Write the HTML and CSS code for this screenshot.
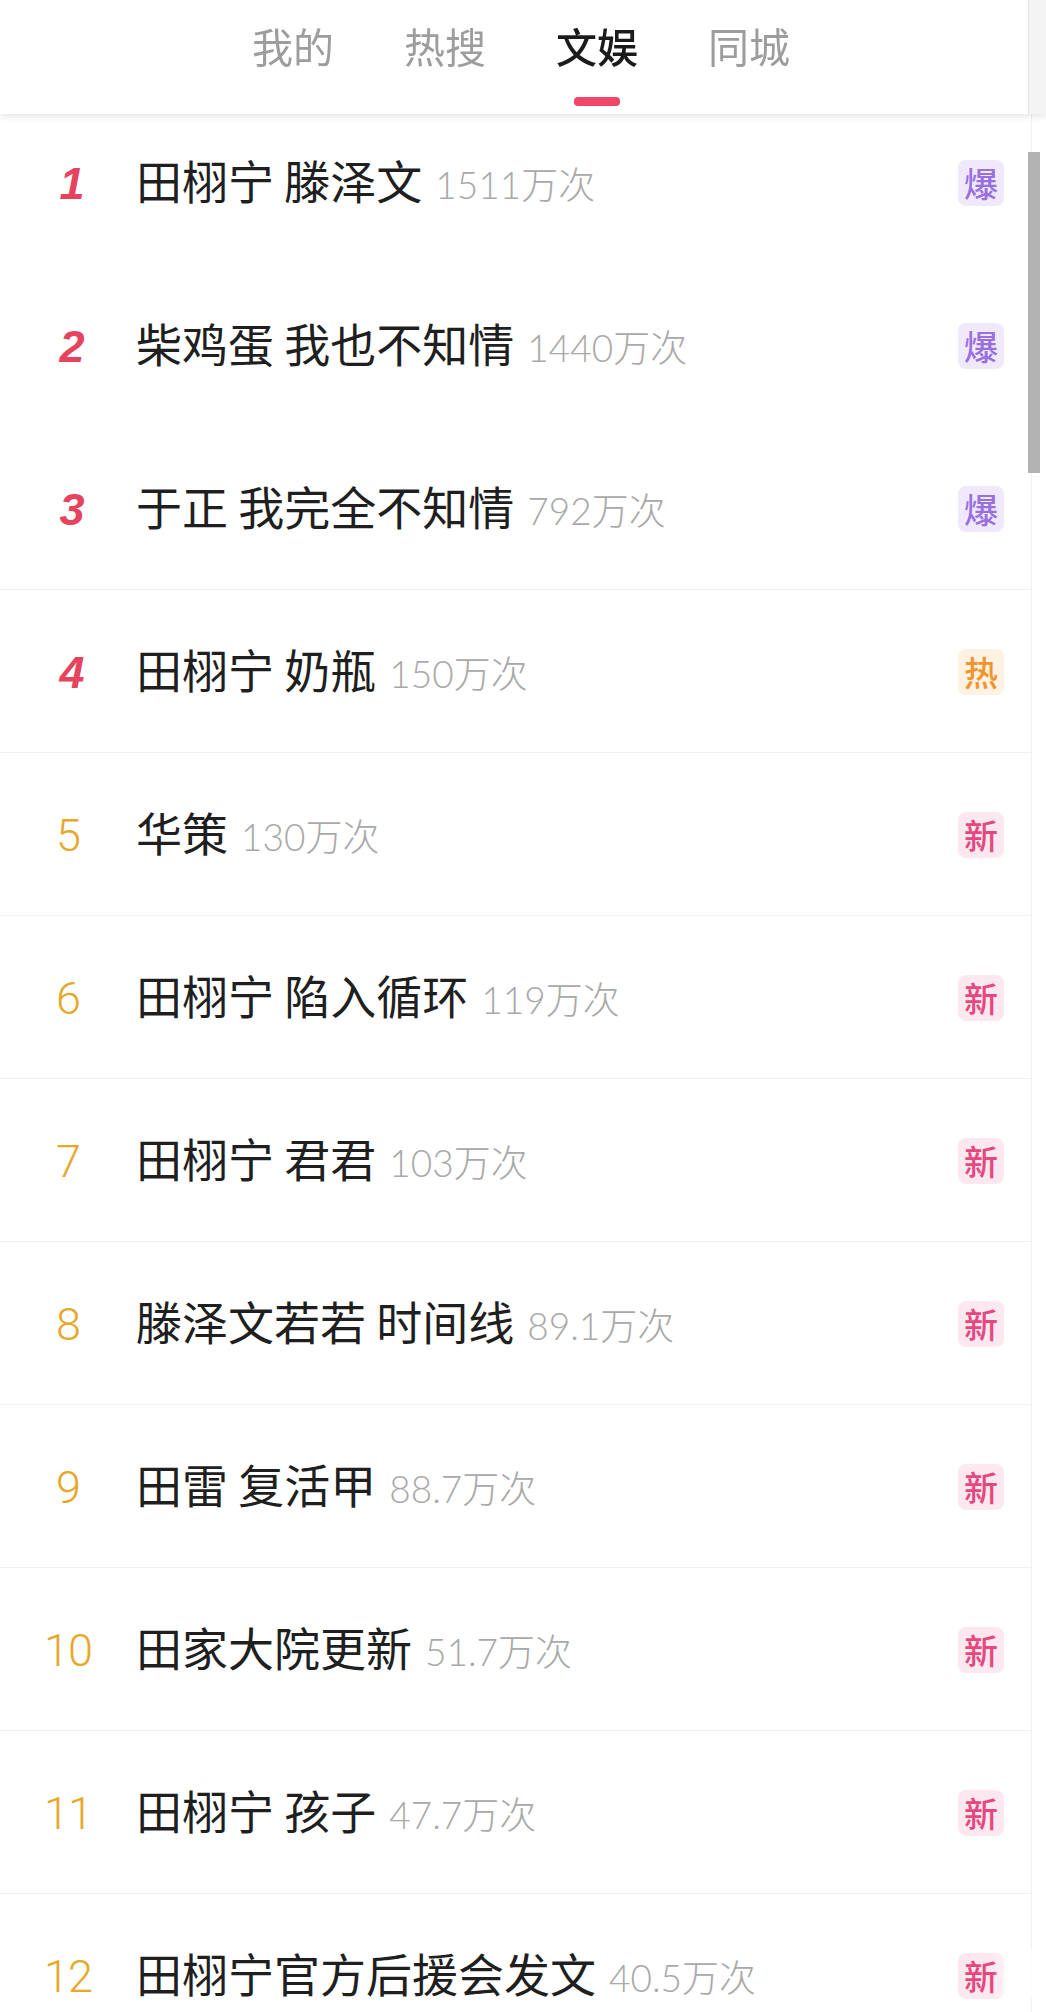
FILE: index.html
```html
<!DOCTYPE html>
<html lang="zh-CN">
<head>
<meta charset="utf-8">
<title>文娱榜</title>
<link rel="stylesheet" href="styles.css">
</head>
<body>
<div class="page">
  <header class="tabs">
    <nav class="tab-row">
      <div class="tab"><span class="tab-label">我的</span><span class="tab-bar"></span></div>
      <div class="tab"><span class="tab-label">热搜</span><span class="tab-bar"></span></div>
      <div class="tab active"><span class="tab-label">文娱</span><span class="tab-bar"></span></div>
      <div class="tab"><span class="tab-label">同城</span><span class="tab-bar"></span></div>
    </nav>
    <div class="tabs-edge"></div>
  </header>

  <main class="list">
    <div class="row top"><span class="rank hot">1</span><span class="title">田栩宁 滕泽文<span class="count">1511万次</span></span><span class="badge bao">爆</span></div>
    <div class="row top"><span class="rank hot">2</span><span class="title">柴鸡蛋 我也不知情<span class="count">1440万次</span></span><span class="badge bao">爆</span></div>
    <div class="row top"><span class="rank hot">3</span><span class="title">于正 我完全不知情<span class="count">792万次</span></span><span class="badge bao">爆</span></div>
    <div class="row"><span class="rank hot">4</span><span class="title">田栩宁 奶瓶<span class="count">150万次</span></span><span class="badge re">热</span></div>
    <div class="row"><span class="rank">5</span><span class="title">华策<span class="count">130万次</span></span><span class="badge xin">新</span></div>
    <div class="row"><span class="rank">6</span><span class="title">田栩宁 陷入循环<span class="count">119万次</span></span><span class="badge xin">新</span></div>
    <div class="row"><span class="rank">7</span><span class="title">田栩宁 君君<span class="count">103万次</span></span><span class="badge xin">新</span></div>
    <div class="row"><span class="rank">8</span><span class="title">滕泽文若若 时间线<span class="count">89.1万次</span></span><span class="badge xin">新</span></div>
    <div class="row"><span class="rank">9</span><span class="title">田雷 复活甲<span class="count">88.7万次</span></span><span class="badge xin">新</span></div>
    <div class="row"><span class="rank">10</span><span class="title">田家大院更新<span class="count">51.7万次</span></span><span class="badge xin">新</span></div>
    <div class="row"><span class="rank">11</span><span class="title">田栩宁 孩子<span class="count">47.7万次</span></span><span class="badge xin">新</span></div>
    <div class="row"><span class="rank">12</span><span class="title">田栩宁官方后援会发文<span class="count">40.5万次</span></span><span class="badge xin">新</span></div>
  </main>

  <div class="scroll-thumb"></div>
  <div class="watermark"></div>
</div>
</body>
</html>
```

FILE: styles.css
```css
* { box-sizing: border-box; }

html, body {
  margin: 0;
  padding: 0;
  background: #ffffff;
}

body {
  font-family: "Noto Sans CJK SC", "Noto Sans", sans-serif;
  color: #222;
  overflow: hidden;
}

.page {
  position: relative;
  width: 1046px;
  height: 2012px;
  overflow: hidden;
}

/* ---------- tabs header ---------- */
.tabs {
  position: sticky;
  top: 0;
  z-index: 2;
  height: 114px;
  display: flex;
  background: #fff;
  box-shadow: 0 3px 6px rgba(0, 0, 0, 0.09);
}

.tab-row {
  flex: 1;
  display: flex;
  justify-content: center;
  gap: 70px;
  padding-top: 17px;
  padding-left: 14px;
  border-right: 1px solid #e4e4e4;
}

.tabs-edge {
  width: 17px;
  background: #f4f4f4;
}

.tab {
  display: flex;
  flex-direction: column;
  align-items: center;
}

.tab-label {
  font-size: 41px;
  line-height: 56px;
  color: #9d9d9d;
}

.tab.active .tab-label {
  color: #1b1b1b;
  font-weight: 500;
}

.tab-bar {
  margin-top: 24px;
  width: 46px;
  height: 9px;
  border-radius: 4px;
  background: transparent;
}

.tab.active .tab-bar {
  background: #f0466a;
}

/* ---------- list ---------- */
.list {
  margin-top: -14px;
  width: 1032px;
  border-right: 1px solid #f1f1f1;
}

.row {
  height: 163px;
  display: flex;
  align-items: center;
  padding-top: 3px;
  padding-right: 27px;
  border-top: 1px solid #f0f0f0;
}

.row.top {
  border-top-color: transparent;
}

.rank {
  width: 136px;
  flex: none;
  text-align: center;
  font-family: Roboto, "Liberation Sans", sans-serif;
  font-size: 45px;
  font-weight: 300;
  letter-spacing: -1px;
  color: #e7a82a;
}

.rank.hot {
  font-family: "Liberation Sans", Roboto, sans-serif;
  font-style: italic;
  font-weight: 700;
  letter-spacing: 0;
  color: #e6445e;
  padding-left: 8px;
}

.title {
  flex: 1;
  margin-top: -10px;
  font-size: 46px;
  color: #1f1f1f;
  white-space: nowrap;
}

.count {
  margin-left: 13px;
  font-family: Lato, "Noto Sans CJK SC", sans-serif;
  font-size: 37px;
  font-weight: 300;
  color: #a9a9a9;
}

.badge {
  flex: none;
  width: 46px;
  height: 46px;
  border-radius: 8px;
  display: flex;
  align-items: center;
  justify-content: center;
  font-size: 34px;
  font-weight: 500;
  line-height: 1;
  margin-top: -2px;
}

.badge.bao {
  background: #efe9fb;
  color: #9a70df;
}

.badge.re {
  background: #fff2e3;
  color: #f0952e;
}

.badge.xin {
  background: #fde8ef;
  color: #e6477e;
}

/* ---------- overlays ---------- */
.scroll-thumb {
  position: absolute;
  left: 1028px;
  top: 152px;
  width: 12px;
  height: 321px;
  background: #b3b3b3;
}

.watermark {
  position: absolute;
  left: 995px;
  top: 1950px;
  width: 48px;
  height: 48px;
  background: linear-gradient(90deg, rgba(255,255,255,0.2), rgba(255,255,255,0.95));
}
```
